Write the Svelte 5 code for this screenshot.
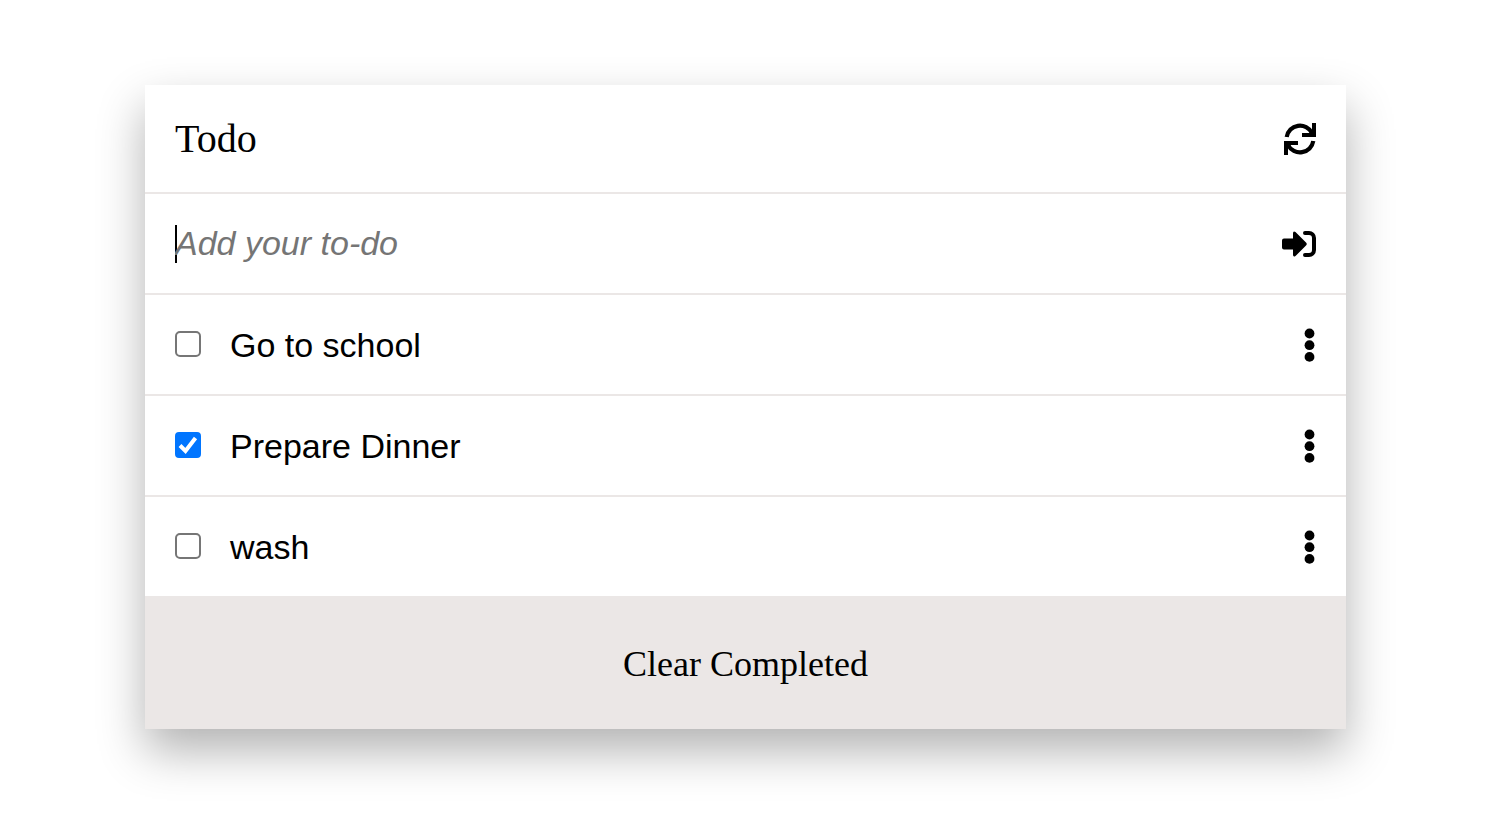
<script>
  let draft = $state('');
  let todos = $state([
    { id: 1, text: 'Go to school', done: false },
    { id: 2, text: 'Prepare Dinner', done: true },
    { id: 3, text: 'wash', done: false }
  ]);

  function add(event) {
    event.preventDefault();
    if (!draft.trim()) return;
    todos.push({ id: Date.now(), text: draft.trim(), done: false });
    draft = '';
  }

  function clearCompleted() {
    todos = todos.filter((todo) => !todo.done);
  }
</script>

<main>
  <section class="card">
    <header class="row head">
      <h1>Todo</h1>
      <button class="icon" type="button" aria-label="Refresh">
        <svg width="32" height="32" viewBox="0 0 32 32">
          <path d="M2.700 14A13.500 13.500 0 0 1 28 9.900M29.300 18A13.500 13.500 0 0 1 4 22.100" fill="none" stroke="#000" stroke-width="4.200" />
          <path d="M28 0h4v14H18v-4h7l3-3zM4 32H0V18h14v4H7l-3 3z" />
        </svg>
      </button>
    </header>

    <form class="row" onsubmit={add}>
      <input class="draft" type="text" placeholder="Add your to-do" aria-label="Add your to-do" bind:value={draft} />
      <button class="icon" type="submit" aria-label="Add">
        <svg width="34" height="26" viewBox="0 0 34 26">
          <path d="M2 7.500h9V2.500Q11 -.500 13.500 1L24 11.500Q25.500 13 24 14.500L13.500 25Q11 26.500 11 23.500V18.500H2Q0 18.500 0 16.500V9.500Q0 7.500 2 7.500z" />
          <path d="M23 2h4a5 5 0 0 1 5 5v12a5 5 0 0 1-5 5H23" fill="none" stroke="#000" stroke-width="4" stroke-linecap="round" />
        </svg>
      </button>
    </form>

    <ul>
      {#each todos as todo (todo.id)}
        <li class="row">
          <label>
            <input class="check" type="checkbox" bind:checked={todo.done} />
            <span>{todo.text}</span>
          </label>
          <button class="icon" type="button" aria-label="Options">
            <svg width="12" height="34" viewBox="0 0 12 34">
              <circle cx="5.500" cy="5.500" r="4.900" />
              <circle cx="5.500" cy="17.200" r="4.900" />
              <circle cx="5.500" cy="28.900" r="4.900" />
            </svg>
          </button>
        </li>
      {/each}
    </ul>

    <button class="clear" type="button" onclick={clearCompleted}>Clear Completed</button>
  </section>
</main>

<style>
  main {
    padding: 85px 158px 85px 145px;
  }

  .card {
    background: #fff;
    box-shadow: 0 22px 44px rgba(0, 0, 0, 0.3);
    font-family: 'Liberation Sans', Arial, sans-serif;
    font-size: 34px;
    color: #000;
  }

  .row {
    display: flex;
    align-items: center;
    justify-content: space-between;
    box-sizing: border-box;
    min-height: 101px;
    padding: 0 30px;
    border-bottom: 2px solid #ebe7e6;
  }

  .head {
    min-height: 109px;
  }

  ul .row {
    padding-top: 1px;
  }

  h1 {
    margin: 0;
    font: 400 40px 'Liberation Serif', 'Times New Roman', serif;
  }

  .icon {
    display: flex;
    padding: 0;
    border: 0;
    background: none;
    cursor: pointer;
  }

  .draft {
    flex: 1;
    min-width: 0;
    height: 38px;
    padding: 0;
    border: 0;
    outline: 0;
    background: none;
    font: inherit;
  }

  .draft:placeholder-shown {
    background: linear-gradient(#000, #000) left / 2px 100% no-repeat;
    caret-color: transparent;
  }

  .draft::placeholder {
    color: #757575;
    font-style: italic;
    opacity: 1;
  }

  ul {
    margin: 0;
    padding: 0;
    list-style: none;
  }

  label {
    display: flex;
    align-items: center;
    gap: 29px;
  }

  .check {
    appearance: none;
    box-sizing: border-box;
    width: 26px;
    height: 26px;
    margin: 0 0 2px;
    border: 2px solid #767676;
    border-radius: 5px;
    background: #fff;
  }

  .check:checked {
    border-color: #0075ff;
    border-radius: 4px;
    background: #0075ff url("data:image/svg+xml,%3Csvg xmlns='http://www.w3.org/2000/svg' viewBox='0 0 26 26'%3E%3Cpath d='M5 13.500l5.500 5.500L20.500 6' fill='none' stroke='white' stroke-width='4'/%3E%3C/svg%3E") center / 26px no-repeat;
  }

  .clear {
    display: block;
    width: 100%;
    padding: 46px 30px 44px;
    border: 0;
    background: #ebe7e6;
    color: #000;
    font: 36px/41px 'Liberation Serif', 'Times New Roman', serif;
    cursor: pointer;
  }
</style>
